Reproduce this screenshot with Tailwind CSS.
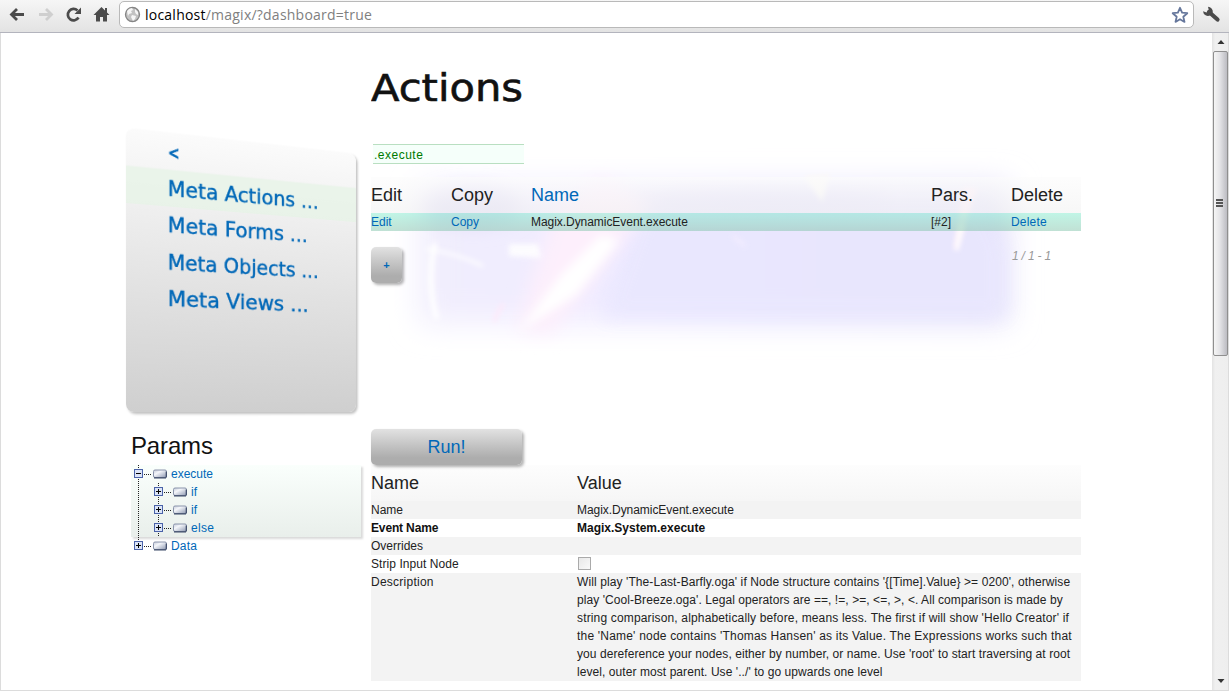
<!DOCTYPE html>
<html lang="en">
<head>
<meta charset="utf-8">
<title>Actions</title>
<script src="https://cdn.jsdelivr.net/npm/@tailwindcss/browser@4"></script>
</head>
<body class="w-[1229px] h-[691px] overflow-hidden bg-white text-[12px] leading-[18px] text-[#222] flex flex-col font-['Liberation_Sans',Arial,sans-serif]">
<svg class="absolute" width="0" height="0">
  <defs>
    <linearGradient id="node" x1="0" y1="0" x2="1" y2="1"><stop offset="0" stop-color="#c4cad8"/><stop offset=".35" stop-color="#f4f6fa"/><stop offset="1" stop-color="#8c97b0"/></linearGradient>
    <g id="leaf"><rect x="0.5" y="0.5" width="13" height="7.5" rx="1.5" fill="url(#node)" stroke="#8a94ab"/><path d="M1 8.3h12M13.3 2v6" stroke="#3c4a68" stroke-width="1.2" fill="none"/></g>
    <g id="box"><rect x="0.5" y="0.5" width="8" height="8" fill="#dbe4f7" stroke="#4a62a8"/><path d="M2 4.5h5" stroke="#000"/></g>
    <g id="plus"><use href="#box"/><path d="M4.5 2v5" stroke="#000"/></g>
  </defs>
</svg>

<!-- Browser toolbar -->
<header class="h-[33px] shrink-0 flex items-start bg-gradient-to-b from-[#f6f6f6] to-[#e3e3e3] border-b border-[#b3b4bd]">
  <svg class="w-[119px] h-[32px] shrink-0" viewBox="0 0 119 32" fill="none">
    <path d="M24 14.5H12M17 9l-5.5 5.5L17 20" stroke="#4b4b4b" stroke-width="2.8"/>
    <path d="M39 14.5h12M46 9l5.500 5.500L46 20" stroke="#cfcfcf" stroke-width="2.800"/>
    <path d="M78.500 17.500A5.700 5.700 0 1 1 77.500 10.500" stroke="#4b4b4b" stroke-width="2.700"/>
    <path d="M81 7.500v6.500h-6.500z" fill="#4b4b4b"/>
    <path d="M101.500 7L93.500 15h2.500v6.500h4v-4.500h3v4.500h4V15h2.500L107 12.500V8h-2v2.500z" fill="#4b4b4b"/>
  </svg>
  <div class="mt-[1px] w-[1075px] h-[27px] shrink-0 rounded-[5px] border border-[#b9b9b9] bg-white flex items-center">
    <svg class="ml-[4px] w-[17px] h-[17px]" viewBox="0 0 17 17"><circle cx="8.500" cy="8.500" r="7" fill="#c2c2c2" stroke="#858585" stroke-width="1.300"/><path d="M3 5q2-3 5-3l1 2-2 1 1 2-3 1-1 2zM8 9l4 1-1 3-2 2-1-2-1-2zM11 3l3 3v3l-2-1-1-2z" fill="#f6f6f6"/></svg>
    <div class="ml-[4px] text-[14px] leading-[24px] tracking-[0.23px] whitespace-nowrap text-[#808080] font-['Open_Sans',sans-serif]"><span class="text-black">localhost</span>/magix/?dashboard=true</div>
    <svg class="ml-auto mr-[4px] w-[18px] h-[18px]" viewBox="0 0 18 18"><path d="M9 1.800l2.100 4.900 5.200.5-4 3.500 1.200 5.200L9 13.200l-4.500 2.700 1.200-5.200-4-3.500 5.200-.5z" fill="#fff" stroke="#66779c" stroke-width="1.800" stroke-linejoin="round"/></svg>
  </div>
  <svg class="ml-[8px] mt-[5px] w-[20px] h-[20px]" viewBox="0 0 20 20"><path d="M7 7l8.500 7.500" stroke="#4b4b4b" stroke-width="4.200" stroke-linecap="round"/><path d="M6 1.800a5 5 0 0 1 4.800 5.500l-2.500 3a5 5 0 0 1-7.300-4l3.500 1.200 2.300-2.200z" fill="#4b4b4b"/></svg>
</header>

<div class="flex flex-1 min-h-0 border-l border-b border-[#dcdcdc]">
  <main class="relative flex flex-1 min-w-0 pl-[125px]">
    <!-- Decorative nebula -->
    <svg class="absolute left-[370px] top-[97px] w-[710px] h-[250px]" viewBox="370 130 710 250">
      <defs>
        <filter id="b20" x="-20%" y="-40%" width="140%" height="180%"><feGaussianBlur stdDeviation="15"/></filter>
        <filter id="b8" x="-50%" y="-60%" width="200%" height="220%"><feGaussianBlur stdDeviation="9"/></filter>
        <filter id="b5" x="-60%" y="-60%" width="220%" height="220%"><feGaussianBlur stdDeviation="5"/></filter>
        <filter id="b2" x="-100%" y="-60%" width="300%" height="220%"><feGaussianBlur stdDeviation="2.500"/></filter>
        <linearGradient id="haze"><stop offset="0" stop-color="#f1eefd"/><stop offset=".3" stop-color="#f0ebff"/><stop offset=".6" stop-color="#e9e6fe"/><stop offset="1" stop-color="#e5e2fa"/></linearGradient>
      </defs>
      <rect x="418" y="184" width="590" height="140" fill="url(#haze)" filter="url(#b20)"/>
      <path d="M640 205H985L1005 250V318H600z" fill="#e9e7fe" opacity=".85" filter="url(#b8)"/>
      <ellipse cx="472" cy="207" rx="48" ry="20" fill="#e2def6" filter="url(#b8)"/>
      <ellipse cx="760" cy="200" rx="130" ry="9" fill="#e2def8" filter="url(#b8)"/>
      <path d="M552 215L600 178 650 205 615 250 550 335 515 330z" fill="#fdeffc" filter="url(#b8)"/>
      <path d="M517 332L560 275 600 235 618 240 575 295z" fill="#fff" filter="url(#b5)"/>
      <path d="M508 244h29l3 14-32-2z" fill="#fff" opacity=".85" filter="url(#b2)"/>
      <path d="M434 243q-9 40 2 76" stroke="#fff" stroke-width="5" fill="none" filter="url(#b2)"/>
      <path d="M425 249q30 4 57 17" stroke="#fff" stroke-width="2.500" fill="none" filter="url(#b2)"/>
      <path d="M493 322q4-12 10-18" stroke="#fdeafa" stroke-width="4" fill="none" filter="url(#b2)"/>
      <path d="M803 176l18 26 8-28z" fill="#fbf9f8" filter="url(#b2)"/>
      <path d="M962 188l14 0-20 62-3-2z" fill="#feeef8" filter="url(#b2)"/>
      <path d="M958 225l5 0-6 26-3-2z" fill="#fff" filter="url(#b2)"/>
      <path d="M732 236l12 10" stroke="#f7efff" stroke-width="3" opacity=".8" filter="url(#b2)"/>
    </svg>

    <aside class="relative w-[245px] shrink-0 flex flex-col pt-[95px]">
      <!-- Menu swings away from the viewer around its left edge -->
      <nav class="w-[257px] h-[284px] shrink-0 rounded-[8px] bg-gradient-to-b from-[#fbfbfb] to-[#cfcfcf] shadow-[2px_2px_3px_rgba(0,0,0,0.25)] origin-bottom-left [transform:perspective(442px)_rotateY(10deg)] text-[#0068b8]">
        <svg class="block w-[257px] h-[200px] font-['DejaVu_Sans',sans-serif]" viewBox="0 0 257 200" fill="#0068b8" stroke="#0068b8" stroke-width=".4" font-size="20.500">
          <rect y="37.500" width="257" height="37.500" fill="#e6f4e6" fill-opacity=".7" stroke="none"/>
          <text x="43.500" y="26" textLength="12" font-size="17" stroke-width=".9" lengthAdjust="spacingAndGlyphs">&lt;</text>
          <text x="43" y="64" textLength="169" lengthAdjust="spacingAndGlyphs">Meta Actions ...</text>
          <text x="43" y="101.500" textLength="156" lengthAdjust="spacingAndGlyphs">Meta Forms ...</text>
          <text x="43" y="139" textLength="169" lengthAdjust="spacingAndGlyphs">Meta Objects ...</text>
          <text x="43" y="176.500" textLength="157" lengthAdjust="spacingAndGlyphs">Meta Views ...</text>
        </svg>
      </nav>
      <section class="pl-[5px] pt-[16px]">
        <h2 class="text-[24px] leading-[36px] mb-px tracking-[-0.15px] text-[#111]">Params</h2>
        <div class="relative w-[230px] text-[#0068b8]">
          <div class="h-[72px] bg-gradient-to-b from-[#fafffc] to-[#e9efeb] shadow-[2px_2px_2px_rgba(0,0,0,0.15)]">
            <div class="h-[18px] pl-[40px]">execute</div>
            <div class="h-[18px] pl-[60px]">if</div>
            <div class="h-[18px] pl-[60px]">if</div>
            <div class="h-[18px] pl-[60px] tracking-[0.3px]">else</div>
          </div>
          <div class="h-[18px] pl-[40px] tracking-[0.2px]">Data</div>
          <svg class="absolute left-0 top-0 w-[60px] h-[92px]" viewBox="0 0 60 92" fill="none">
            <path d="M7.500 0v86M27.500 18v54M13 9.500h8M13 81.500h8M33 27.500h8M33 45.500h8M33 63.500h8" stroke="#222" stroke-dasharray="1 1"/>
            <use href="#box" x="3" y="4"/><use href="#leaf" x="22" y="4.500"/>
            <use href="#plus" x="23" y="22"/><use href="#leaf" x="42" y="22.500"/>
            <use href="#plus" x="23" y="40"/><use href="#leaf" x="42" y="40.500"/>
            <use href="#plus" x="23" y="58"/><use href="#leaf" x="42" y="58.500"/>
            <use href="#plus" x="3" y="76"/><use href="#leaf" x="22" y="76.500"/>
          </svg>
        </div>
      </section>
    </aside>

    <section class="relative w-[710px] shrink-0 flex flex-col">
      <h1 class="h-[111px] shrink-0">
        <svg class="block w-[160px] h-[90px] font-['DejaVu_Sans',sans-serif]" viewBox="0 0 160 90"><text x="0" y="68" font-size="36.500" textLength="152" lengthAdjust="spacingAndGlyphs" fill="#111" stroke="#111" stroke-width=".6">Actions</text></svg>
      </h1>
      <div class="ml-[2px] w-[151px] h-[20px] shrink-0 border-y border-[#b9dfc1] bg-[#f5fffa] pl-[1px] leading-[20px] tracking-[0.5px] text-[#007a00]">.execute</div>

      <div class="mt-[13px] flex flex-col">
        <div class="h-[36px] grid grid-cols-[80px_80px_400px_80px_70px] text-[18px] leading-[36px] bg-gradient-to-b from-[#fcfcfc]/60 to-[#f2f2f2]/60">
          <div>Edit</div><div>Copy</div><div class="text-[#0068b8]">Name</div><div>Pars.</div><div>Delete</div>
        </div>
        <div class="h-[18px] grid grid-cols-[80px_80px_400px_80px_70px] bg-gradient-to-b from-[#82ebcd]/50 to-[#82c3aa]/50">
          <div class="text-[#0068b8]">Edit</div><div class="text-[#0068b8]">Copy</div><div class="tracking-[-0.05px]">Magix.DynamicEvent.execute</div><div>[#2]</div><div class="text-[#0068b8] tracking-[0.2px]">Delete</div>
        </div>
      </div>
      <div class="mt-[16px] flex justify-between h-[182px] shrink-0">
        <div class="w-[31px] h-[36px] rounded-[5px] bg-gradient-to-b from-[#e2e2e2] to-[#adadad] to-80% shadow-[2px_2px_3px_rgba(0,0,0,0.3)] text-center leading-[36px] text-[#0068b8] text-[11px] font-bold">+</div>
        <div class="w-[70px] italic text-[#999] pl-[1px] tracking-[-0.2px]">1 / 1 - 1</div>
      </div>
      <div class="relative z-10 w-[151px] h-[36px] shrink-0 rounded-[5px] bg-gradient-to-b from-[#e2e2e2] to-[#adadad] to-80% shadow-[2px_2px_3px_rgba(0,0,0,0.3)] text-center text-[18px] leading-[36px] text-[#0068b8]">Run!</div>
      <div class="grid grid-cols-[206px_504px] h-[36px] shrink-0 text-[18px] leading-[36px] bg-gradient-to-b from-[#fdfdfd] to-[#f6f6f6]"><div>Name</div><div>Value</div></div>
      <div class="grid grid-cols-[206px_504px] h-[18px] shrink-0 bg-[#f3f3f3]"><div>Name</div><div class="tracking-[-0.05px]">Magix.DynamicEvent.execute</div></div>
      <div class="grid grid-cols-[206px_504px] h-[18px] shrink-0 font-bold text-[#111]"><div class="tracking-[-0.15px]">Event Name</div><div>Magix.System.execute</div></div>
      <div class="grid grid-cols-[206px_504px] h-[18px] shrink-0 bg-[#f3f3f3]"><div>Overrides</div><div></div></div>
      <div class="grid grid-cols-[206px_504px] h-[18px] shrink-0"><div class="tracking-[0.07px]">Strip Input Node</div><div class="pt-[2px] pl-[1px]"><div class="w-[13px] h-[13px] border border-[#aaa] bg-gradient-to-br from-[#e8e8e8] to-[#fafafa]"></div></div></div>
      <div class="grid grid-cols-[206px_504px] h-[108px] shrink-0 bg-[#f3f3f3]"><div class="tracking-[0.25px]">Description</div>
        <div class="whitespace-nowrap">
          <div class="tracking-[0.1px]">Will play 'The-Last-Barfly.oga' if Node structure contains '{[Time].Value} &gt;= 0200', otherwise</div>
          <div class="tracking-[0.065px]">play 'Cool-Breeze.oga'. Legal operators are ==, !=, &gt;=, &lt;=, &gt;, &lt;. All comparison is made by</div>
          <div class="tracking-[0.155px]">string comparison, alphabetically before, means less. The first if will show 'Hello Creator' if</div>
          <div class="tracking-[0.2px]">the 'Name' node contains 'Thomas Hansen' as its Value. The Expressions works such that</div>
          <div class="tracking-[0.075px]">you dereference your nodes, either by number, or name. Use 'root' to start traversing at root</div>
          <div class="tracking-[0.07px]">level, outer most parent. Use '../' to go upwards one level</div>
        </div>
      </div>
    </section>
  </main>

  <!-- Scrollbar -->
  <div class="w-[17px] shrink-0 flex flex-col items-center bg-gradient-to-r from-[#e3e3e3] via-[#f0f0f0] via-20% to-[#eeeeee] border-r border-[#dcdcdc]">
    <svg class="w-[15px] h-[18px] shrink-0" viewBox="0 0 15 18"><path d="M4.500 11l3.500-4 3.500 4z" fill="#333"/></svg>
    <div class="w-[15px] h-[305px] shrink-0 rounded-[2px] border border-[#8f8f8f] bg-gradient-to-r from-[#f5f5f5] via-[#e4e4e7] via-45% to-[#bcbcc2] flex items-center justify-center">
      <div class="w-[7px] h-[8px] mr-[2px] mb-[2px] flex flex-col justify-between"><i class="h-[2px] bg-[#555]"></i><i class="h-[2px] bg-[#555]"></i><i class="h-[2px] bg-[#555]"></i></div>
    </div>
    <svg class="mt-auto w-[15px] h-[18px] shrink-0" viewBox="0 0 15 18"><path d="M4.500 7l3.500 4 3.500-4z" fill="#333"/></svg>
  </div>
</div>
</body>
</html>
